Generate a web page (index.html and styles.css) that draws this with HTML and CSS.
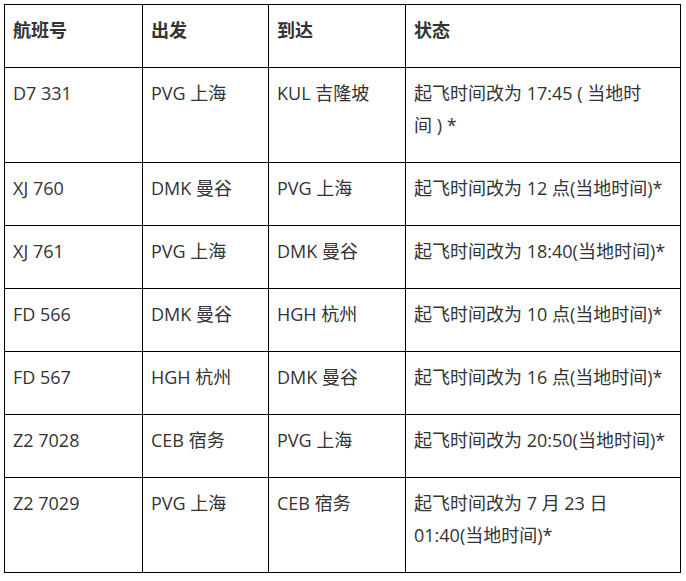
FILE: index.html
```html
<!DOCTYPE html>
<html lang="zh-CN">
<head>
<meta charset="utf-8">
<title>航班时刻变更</title>
<link rel="stylesheet" href="styles.css">
</head>
<body>
<div class="flights" role="table">
  <div class="cell head" role="columnheader">航班号</div>
  <div class="cell head" role="columnheader">出发</div>
  <div class="cell head" role="columnheader">到达</div>
  <div class="cell head" role="columnheader">状态</div>

  <div class="cell">D7 331</div>
  <div class="cell">PVG 上海</div>
  <div class="cell">KUL 吉隆坡</div>
  <div class="cell">起飞时间改为 17:45 ( 当地时间&nbsp;) *</div>

  <div class="cell">XJ 760</div>
  <div class="cell">DMK 曼谷</div>
  <div class="cell">PVG 上海</div>
  <div class="cell">起飞时间改为 12 点(当地时间)*</div>

  <div class="cell">XJ 761</div>
  <div class="cell">PVG 上海</div>
  <div class="cell">DMK 曼谷</div>
  <div class="cell">起飞时间改为 18:40(当地时间)*</div>

  <div class="cell">FD 566</div>
  <div class="cell">DMK 曼谷</div>
  <div class="cell">HGH 杭州</div>
  <div class="cell">起飞时间改为 10 点(当地时间)*</div>

  <div class="cell">FD 567</div>
  <div class="cell">HGH 杭州</div>
  <div class="cell">DMK 曼谷</div>
  <div class="cell">起飞时间改为 16 点(当地时间)*</div>

  <div class="cell">Z2 7028</div>
  <div class="cell">CEB 宿务</div>
  <div class="cell">PVG 上海</div>
  <div class="cell">起飞时间改为 20:50(当地时间)*</div>

  <div class="cell">Z2 7029</div>
  <div class="cell">PVG 上海</div>
  <div class="cell">CEB 宿务</div>
  <div class="cell">起飞时间改为 7 月 23 日 01:40(当地时间)*</div>
</div>
</body>
</html>
```

FILE: styles.css
```css
html, body {
  margin: 0;
  padding: 0;
  background: #ffffff;
}

body {
  padding: 4px 0 0 4px;
  font-family: "Open Sans", "Noto Sans CJK SC", sans-serif;
  font-size: 18px;
  color: #333333;
}

.flights {
  display: grid;
  grid-template-columns: 137px 125px 136px 274px;
  gap: 1px;
  padding: 1px;
  width: max-content;
  background: #000000;
}

.cell {
  background: #ffffff;
  padding: 9px 12px 21px 8px;
  line-height: 32px;
}

.head {
  font-weight: bold;
}
```
